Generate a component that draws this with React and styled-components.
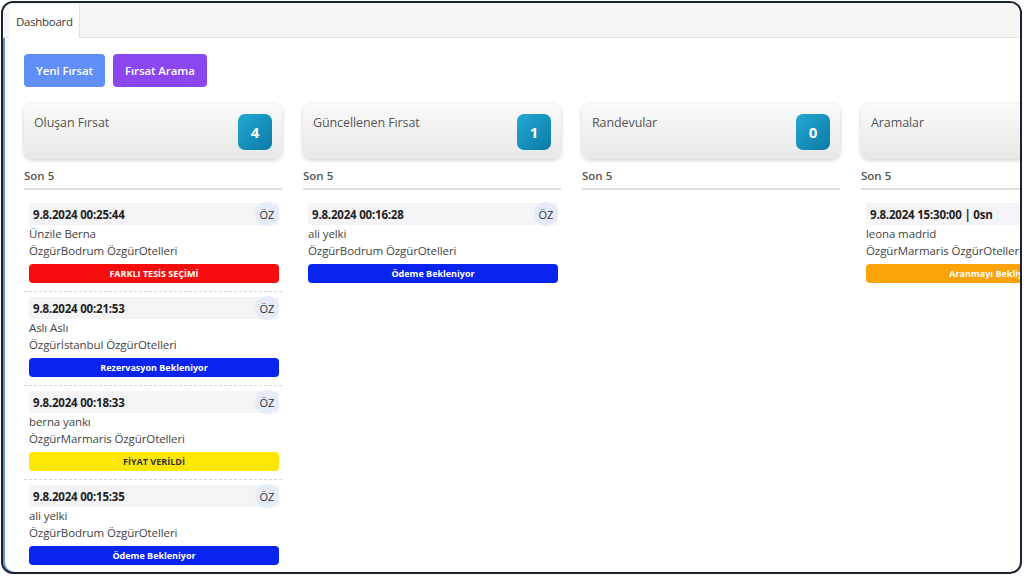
import styled, { createGlobalStyle } from "styled-components";

const Global = createGlobalStyle`
  html, body {
    margin: 0;
    padding: 0;
    background: #ffffff;
    font-family: "Open Sans", "Liberation Sans", sans-serif;
  }
  * { box-sizing: border-box; }
`;

// dış pencere çerçevesi
const Frame = styled.div`
  margin: 1px 2px 2px 1px;
  height: 573px;
  border: 2px solid #1b2230;
  border-radius: 12px;
  overflow: hidden;
  background: #ffffff;
  box-shadow: inset 2px 0 0 #6b8fd6;
  display: flex;
  flex-direction: column;
`;

const TabBar = styled.div`
  display: flex;
  height: 35px;
  padding: 2px 0 0 6px;
  background: #f5f5f5;
  border-bottom: 1px solid #e6e6e6;
`;

const Tab = styled.div`
  display: flex;
  align-items: center;
  padding: 0 6px 0 7px;
  background: #ffffff;
  border-right: 1px solid #e2e2e2;
  margin-bottom: -1px;
  color: #3a3a3a;
  font-size: 11.5px;
  letter-spacing: -0.3px;
`;

const Content = styled.div`
  flex: 1;
  padding: 16px 0 0 21px;
  overflow: hidden;
`;

const Actions = styled.div`
  display: flex;
  gap: 8px;
`;

const ActionButton = styled.button`
  height: 33px;
  padding: 0 12px;
  border: none;
  border-radius: 4px;
  background: ${(p) => p.$bg};
  color: #ffffff;
  font-family: inherit;
  font-size: 11.5px;
  font-weight: 600;
  letter-spacing: -0.1px;
`;

const Columns = styled.div`
  display: grid;
  grid-template-columns: repeat(4, 258px);
  gap: 21px;
  margin-top: 17px;
  width: max-content;
`;

const Column = styled.div`
  display: flex;
  flex-direction: column;
`;

const HeadCard = styled.div`
  height: 55px;
  padding: 10px 10px;
  border-radius: 8px;
  background: linear-gradient(180deg, #fafafa 0%, #e8e8e8 100%);
  box-shadow: 0 1px 4px rgba(0, 0, 0, 0.2);
  display: flex;
  justify-content: space-between;
  align-items: flex-start;
`;

const HeadTitle = styled.div`
  color: #555;
  font-size: 12.5px;
  font-weight: 500;
  letter-spacing: -0.1px;
`;

const Badge = styled.div`
  width: 34px;
  height: 36px;
  border-radius: 7px;
  background: linear-gradient(135deg, #22a9d2 0%, #0c7aa6 100%);
  color: #ffffff;
  font-weight: 700;
  font-size: 15px;
  display: flex;
  align-items: center;
  justify-content: center;
`;

const SubTitle = styled.div`
  margin-top: 9px;
  padding-bottom: 5px;
  border-bottom: 2px solid #dedede;
  color: #555;
  font-size: 11.5px;
  font-weight: 600;
`;

const List = styled.div`
  display: flex;
  flex-direction: column;
  padding-top: 13px;
`;

const Item = styled.div`
  padding: 0 3px 8px 5px;
  & + & {
    padding-top: 5px;
    border-top: 1px dashed #d6d6d6;
  }
`;

const ItemHead = styled.div`
  height: 22px;
  display: flex;
  align-items: center;
  justify-content: space-between;
  padding-left: 4px;
  background: #f4f4f6;
  border-radius: 3px;
`;

const Stamp = styled.div`
  color: #222;
  font-size: 11.5px;
  font-weight: 700;
  letter-spacing: -0.2px;
  white-space: nowrap;
`;

const Owner = styled.div`
  width: 24px;
  height: 24px;
  border-radius: 50%;
  background: #e5ebf8;
  color: #333;
  font-size: 11px;
  display: flex;
  align-items: center;
  justify-content: center;
`;

const Line = styled.div`
  color: #444;
  font-size: 11.5px;
  line-height: 17px;
  letter-spacing: -0.1px;
  white-space: nowrap;
  &:first-of-type {
    margin-top: 1px;
  }
`;

const Status = styled.div`
  margin-top: 5px;
  height: 19px;
  border-radius: 4px;
  background: ${(p) => p.$bg};
  color: ${(p) => p.$fg || "#ffffff"};
  font-size: 9px;
  font-weight: 700;
  display: flex;
  align-items: center;
  justify-content: center;
  white-space: nowrap;
`;

const columns = [
  {
    title: "Oluşan Fırsat",
    count: 4,
    items: [
      { date: "9.8.2024 00:25:44", name: "Ünzile Berna", hotel: "ÖzgürBodrum ÖzgürOtelleri", status: "FARKLI TESİS SEÇİMİ", bg: "#f70d0d" },
      { date: "9.8.2024 00:21:53", name: "Aslı Aslı", hotel: "Özgürİstanbul ÖzgürOtelleri", status: "Rezervasyon Bekleniyor", bg: "#0a24ef" },
      { date: "9.8.2024 00:18:33", name: "berna yankı", hotel: "ÖzgürMarmaris ÖzgürOtelleri", status: "FİYAT VERİLDİ", bg: "#fde706", fg: "#333" },
      { date: "9.8.2024 00:15:35", name: "ali yelki", hotel: "ÖzgürBodrum ÖzgürOtelleri", status: "Ödeme Bekleniyor", bg: "#0a24ef" },
    ],
  },
  {
    title: "Güncellenen Fırsat",
    count: 1,
    items: [
      { date: "9.8.2024 00:16:28", name: "ali yelki", hotel: "ÖzgürBodrum ÖzgürOtelleri", status: "Ödeme Bekleniyor", bg: "#0a24ef" },
    ],
  },
  { title: "Randevular", count: 0, items: [] },
  {
    title: "Aramalar",
    count: 1,
    items: [
      { date: "9.8.2024 15:30:00 | 0sn", name: "leona madrid", hotel: "ÖzgürMarmaris ÖzgürOtelleri", status: "Aranmayı Bekliyor", bg: "#fba40a" },
    ],
  },
];

export default function App() {
  return (
    <>
      <Global />
      <Frame>
        <TabBar>
          <Tab>Dashboard</Tab>
        </TabBar>
        <Content>
          <Actions>
            <ActionButton $bg="#5f8ff7">Yeni Fırsat</ActionButton>
            <ActionButton $bg="#8b46f0">Fırsat Arama</ActionButton>
          </Actions>
          <Columns>
            {columns.map((c) => (
              <Column key={c.title}>
                <HeadCard>
                  <HeadTitle>{c.title}</HeadTitle>
                  <Badge>{c.count}</Badge>
                </HeadCard>
                <SubTitle>Son 5</SubTitle>
                <List>
                  {c.items.map((it) => (
                    <Item key={it.date}>
                      <ItemHead>
                        <Stamp>{it.date}</Stamp>
                        <Owner>ÖZ</Owner>
                      </ItemHead>
                      <Line>{it.name}</Line>
                      <Line>{it.hotel}</Line>
                      <Status $bg={it.bg} $fg={it.fg}>{it.status}</Status>
                    </Item>
                  ))}
                </List>
              </Column>
            ))}
          </Columns>
        </Content>
      </Frame>
    </>
  );
}
